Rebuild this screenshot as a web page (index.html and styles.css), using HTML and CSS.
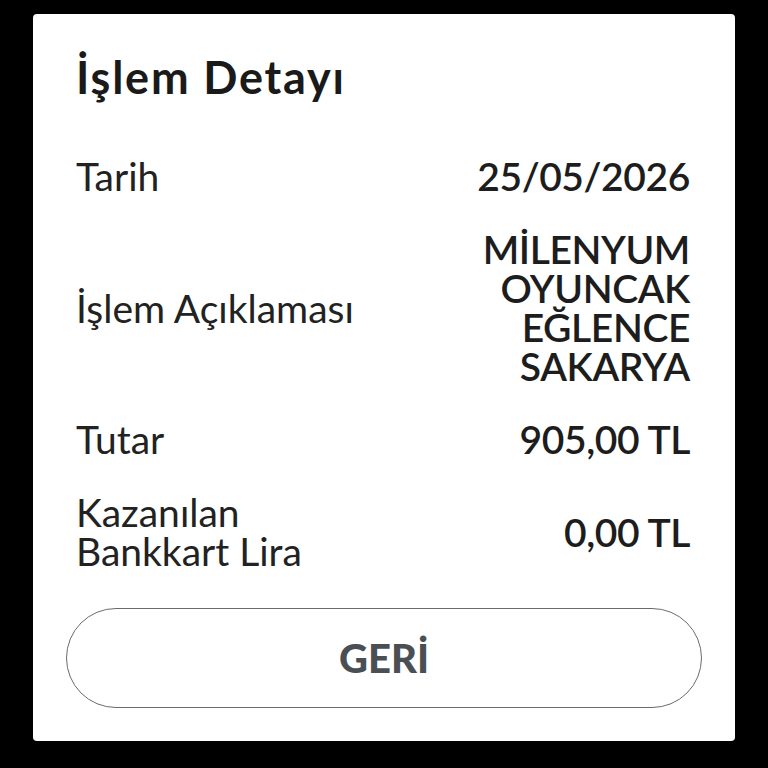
FILE: index.html
```html
<!DOCTYPE html>
<html lang="tr">
<head>
<meta charset="utf-8">
<link rel="stylesheet" href="styles.css">
</head>
<body>
<div class="card">
  <h1 class="title">İşlem Detayı</h1>
  <div class="rows">
    <div class="row">
      <div class="label">Tarih</div>
      <div class="value">25/05/2026</div>
    </div>
    <div class="row">
      <div class="label">İşlem Açıklaması</div>
      <div class="value">MİLENYUM OYUNCAK EĞLENCE SAKARYA</div>
    </div>
    <div class="row">
      <div class="label">Tutar</div>
      <div class="value">905,00 TL</div>
    </div>
    <div class="row">
      <div class="label">Kazanılan Bankkart Lira</div>
      <div class="value">0,00 TL</div>
    </div>
  </div>
  <button class="back">GERİ</button>
</div>
</body>
</html>
```
FILE: styles.css
```css
html, body {
  margin: 0;
  padding: 0;
  background: #000;
  width: 768px;
  height: 768px;
  overflow: hidden;
}
body {
  font-family: Lato, "Open Sans", sans-serif;
  color: #1d1d1d;
}
.card {
  margin: 14px 0 0 33px;
  width: 702px;
  height: 727px;
  background: #fff;
  border-radius: 4px;
  box-sizing: border-box;
  padding: 37px 33px 33px;
  display: flex;
  flex-direction: column;
}
.title {
  margin: 0 10px;
  font-size: 45px;
  line-height: 52px;
  font-weight: 700;
  letter-spacing: 1.8px;
  color: #1a1a1a;
}
.rows {
  margin: 54px 12px 0 10px;
  display: flex;
  flex-direction: column;
  gap: 34px;
}
.row {
  display: grid;
  grid-template-columns: 1fr 1fr;
  align-items: center;
}
.label {
  font-size: 39px;
  line-height: 39px;
  font-weight: 400;
  color: #222;
}
.value {
  font-size: 39px;
  line-height: 39px;
  font-weight: 600;
  letter-spacing: -0.4px;
  text-align: right;
}
.back {
  margin-top: auto;
  height: 100px;
  border: 1.5px solid #6b6b6b;
  border-radius: 50px;
  background: #fff;
  font-family: inherit;
  font-size: 40px;
  font-weight: 900;
  color: #4a4f54;
}
```
